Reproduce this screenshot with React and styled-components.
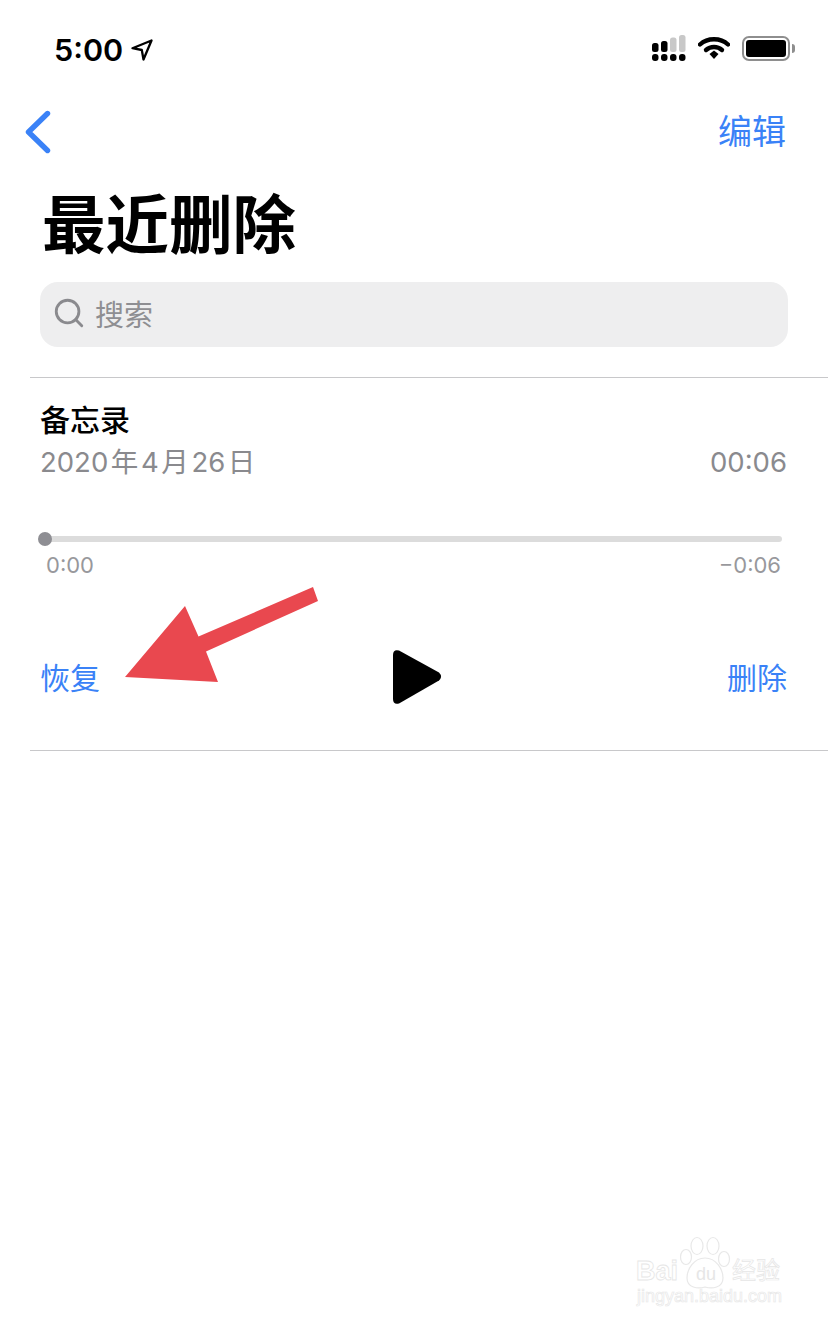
import styled, { createGlobalStyle } from 'styled-components';
import { Search } from 'lucide-react';

const GlobalStyle = createGlobalStyle`
  html, body {
    margin: 0;
    padding: 0;
    background: #fff;
    font-family: Inter, "Noto Sans CJK SC", sans-serif;
  }
`;

const App = () => (
  <Page>
    <GlobalStyle />
    <StatusBar>
      <TimeGroup>
        <Time>5:00</Time>
        <svg width="22" height="22" viewBox="0 0 22 22">
          <path d="M1.5 9.2 L20.5 1.5 L12.5 20.5 L10.8 11 Z" fill="none" stroke="#000" strokeWidth="2.3" strokeLinejoin="round" />
        </svg>
      </TimeGroup>
      <StatusIcons>
        <svg width="34" height="26" viewBox="0 0 34 26">
          <rect x="0" y="8" width="6.5" height="9" rx="2.5" fill="#000" />
          <rect x="9" y="6" width="6.5" height="11" rx="2.5" fill="#000" />
          <rect x="18" y="2.5" width="6.5" height="14.5" rx="2.5" fill="#c8c8c8" />
          <rect x="27" y="0" width="6.5" height="17" rx="2.5" fill="#c8c8c8" />
          <rect x="0" y="19" width="6.5" height="7" rx="3" fill="#000" />
          <rect x="9" y="19" width="6.5" height="7" rx="3" fill="#000" />
          <rect x="18" y="19" width="6.5" height="7" rx="3" fill="#000" />
          <rect x="27" y="19" width="6.5" height="7" rx="3" fill="#000" />
        </svg>
        <svg width="32" height="24" viewBox="0 0 32 24">
          <path d="M2 8.5 C9.5 1.5 22.5 1.5 30 8.5" fill="none" stroke="#000" strokeWidth="4.4" strokeLinecap="round" />
          <path d="M8 14 C12.5 10 19.5 10 24 14" fill="none" stroke="#000" strokeWidth="4.4" strokeLinecap="round" />
          <path d="M11.5 18 L16 14.5 L20.5 18 L16 23 Z" fill="#000" />
        </svg>
        <Battery>
          <BatteryFill />
        </Battery>
      </StatusIcons>
    </StatusBar>

    <NavBar>
      <svg width="26" height="44" viewBox="0 0 26 44">
        <path d="M22.5 3.5 L3.5 22 L22.5 40.5" fill="none" stroke="#3a82f7" strokeWidth="5.4" strokeLinecap="round" strokeLinejoin="round" />
      </svg>
      <NavAction>编辑</NavAction>
    </NavBar>

    <Title>最近删除</Title>

    <SearchField>
      <SearchIcon size={34} color="#8a8a8e" strokeWidth={2} />
      <SearchText>搜索</SearchText>
    </SearchField>

    <Divider />

    <Recording>
      <RecordingName>备忘录</RecordingName>
      <MetaRow>
        <span>2020<DateUnit>年</DateUnit>4<DateUnit>月</DateUnit>26<DateUnit>日</DateUnit></span>
        <span>00:06</span>
      </MetaRow>
      <Track>
        <Thumb />
      </Track>
      <TimeRow>
        <span>0:00</span>
        <span>−0:06</span>
      </TimeRow>
      <Controls>
        <TextAction>恢复</TextAction>
        <PlayIcon width="50" height="56" viewBox="0 0 50 56">
          <path d="M0 6 Q0 0 6 1.5 L46 23.5 Q50 27.5 46 31.5 L6 54.5 Q0 56 0 50 Z" fill="#000" />
        </PlayIcon>
        <TextAction>删除</TextAction>
      </Controls>
    </Recording>

    <Divider />

    <ArrowOverlay width="200" height="104" viewBox="0 0 200 104">
      <path d="M0 90 L60 19 L73.5 49.5 L188 0 L193 14 L81 64.5 L93 95 Z" fill="#e9484f" />
    </ArrowOverlay>

    <Watermark>
      <WatermarkPaw width="56" height="58" viewBox="0 0 56 58">
        <g fill="#fff" stroke="#e8e8e8" strokeWidth="1.2">
          <ellipse cx="8" cy="21" rx="5.5" ry="7.5" />
          <ellipse cx="19" cy="10" rx="6" ry="8.5" />
          <ellipse cx="35" cy="10" rx="6" ry="8.5" />
          <ellipse cx="46" cy="23" rx="5.5" ry="7.5" />
          <path d="M27 22 C38 22 45 33 45 42 C45 52 34 53 27 51 C20 53 9 52 9 42 C9 33 16 22 27 22 Z" />
        </g>
      </WatermarkPaw>
      <WatermarkBrand>Bai</WatermarkBrand>
      <WatermarkDu>du</WatermarkDu>
      <WatermarkCn>经验</WatermarkCn>
      <WatermarkUrl>jingyan.baidu.com</WatermarkUrl>
    </Watermark>
  </Page>
);

const Page = styled.div`
  position: relative;
  width: 828px;
  height: 1325px;
  overflow: hidden;
  background: #fff;
`;

const StatusBar = styled.div`
  display: flex;
  justify-content: space-between;
  align-items: center;
  height: 26px;
  padding: 35px 38px 0 54px;
`;

const TimeGroup = styled.div`
  display: flex;
  align-items: center;
  gap: 8px;
  margin-top: 3px;
`;

const Time = styled.span`
  font-size: 30.5px;
  font-weight: 600;
  line-height: 28px;
  color: #000;
`;

const StatusIcons = styled.div`
  display: flex;
  align-items: center;
  gap: 12px;
`;

const Battery = styled.div`
  position: relative;
  box-sizing: border-box;
  width: 48px;
  height: 25px;
  padding: 2px;
  border: 2px solid #8e8e8e;
  border-radius: 7px;

  &::after {
    content: '';
    position: absolute;
    right: -7px;
    top: 6px;
    width: 3px;
    height: 9px;
    background: #8e8e8e;
    border-radius: 0 3px 3px 0;
  }
`;

const BatteryFill = styled.div`
  height: 100%;
  background: #000;
  border-radius: 3px;
`;

const NavBar = styled.div`
  display: flex;
  justify-content: space-between;
  align-items: center;
  height: 60px;
  margin-top: 41px;
  padding: 0 42px 0 25px;
`;

const NavAction = styled.span`
  font-size: 34px;
  line-height: 40px;
  color: #3a82f7;
`;

const Title = styled.h1`
  margin: 25px 0 0 42px;
  font-size: 63.5px;
  font-weight: 700;
  line-height: 76px;
  color: #000;
`;

const SearchField = styled.div`
  display: flex;
  align-items: center;
  gap: 10px;
  height: 65px;
  margin: 19px 40px 30px;
  padding-left: 11px;
  background: #eeeeef;
  border-radius: 18px;
`;

const SearchIcon = styled(Search)`
  margin: -4px 0 0 1px;
`;

const SearchText = styled.span`
  font-size: 29px;
  line-height: 40px;
  margin: 3px 0 0 -1px;
  color: #8e8e92;
`;

const Divider = styled.div`
  height: 1px;
  margin-left: 30px;
  background: #c8c8ca;
`;

const Recording = styled.div`
  height: 372px;
  padding: 0 41px 0 40px;
`;

const RecordingName = styled.div`
  padding-top: 23px;
  font-size: 30px;
  font-weight: 500;
  line-height: 38px;
  color: #000;
`;

const MetaRow = styled.div`
  display: flex;
  justify-content: space-between;
  margin-top: 3px;
  font-size: 27.5px;
  line-height: 40px;
  color: #8a8a8e;
`;

const DateUnit = styled.span`
  margin: 0 2.6px;
`;

const Track = styled.div`
  position: relative;
  height: 6px;
  margin: 54px 5px 0 5px;
  background: #dcdcdc;
  border-radius: 3px;
`;

const Thumb = styled.div`
  position: absolute;
  left: -7px;
  top: -4px;
  width: 14px;
  height: 14px;
  background: #8e8e93;
  border-radius: 50%;
`;

const TimeRow = styled.div`
  display: flex;
  justify-content: space-between;
  margin: 10px 6px 0 6px;
  font-size: 22px;
  line-height: 26px;
  color: #98989c;
`;

const Controls = styled.div`
  display: flex;
  justify-content: space-between;
  align-items: center;
  margin-top: 71px;
  height: 56px;
`;

const PlayIcon = styled.svg`
  margin-left: 8px;
`;

const TextAction = styled.span`
  font-size: 30px;
  line-height: 40px;
  padding-top: 2px;
  color: #3a82f7;
`;

const ArrowOverlay = styled.svg`
  position: absolute;
  left: 125px;
  top: 587px;
`;

const Watermark = styled.div`
  position: absolute;
  left: 634px;
  top: 1234px;
  width: 150px;
  height: 74px;
`;

const WatermarkPaw = styled.svg`
  position: absolute;
  left: 44px;
  top: 2px;
`;

const WatermarkBrand = styled.span`
  position: absolute;
  left: 2px;
  top: 22px;
  font-family: "Liberation Sans", sans-serif;
  font-size: 27px;
  font-weight: 700;
  line-height: 30px;
  color: #fff;
  -webkit-text-stroke: 0.8px #e6e6e6;
`;

const WatermarkDu = styled.span`
  position: absolute;
  left: 62px;
  top: 30px;
  font-family: "Liberation Sans", sans-serif;
  font-size: 18px;
  line-height: 20px;
  color: #e6e6e6;
`;

const WatermarkCn = styled.span`
  position: absolute;
  left: 98px;
  top: 22px;
  font-size: 24px;
  line-height: 30px;
  color: #fff;
  -webkit-text-stroke: 0.7px #e6e6e6;
`;

const WatermarkUrl = styled.span`
  position: absolute;
  left: 3px;
  top: 52px;
  font-family: "Liberation Sans", sans-serif;
  font-size: 18px;
  line-height: 20px;
  color: #fff;
  -webkit-text-stroke: 0.7px #e8e8e8;
`;

export default App;
